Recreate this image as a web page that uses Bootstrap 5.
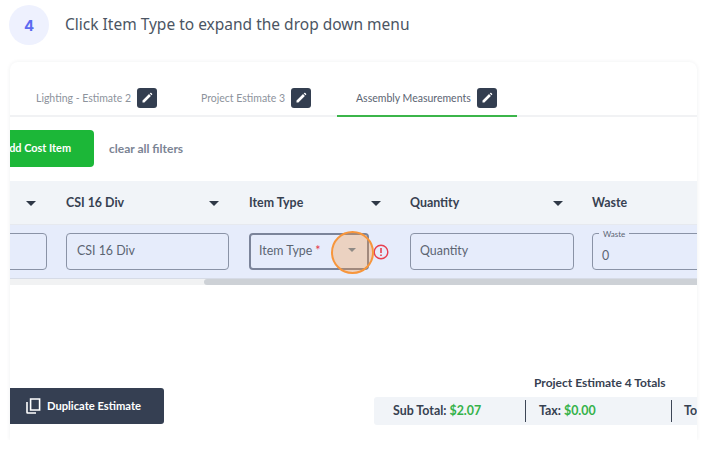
<!DOCTYPE html>
<html lang="en">
<head>
<meta charset="utf-8">
<title>Step 4</title>
<link rel="stylesheet" href="https://cdn.jsdelivr.net/npm/bootstrap@5.3.0/dist/css/bootstrap.min.css">
<style>
html,body{height:450px;overflow:hidden}
body{background:#fff;font-family:"Noto Sans","Liberation Sans",sans-serif;position:relative}
.step-head{height:62px;padding:5px 0 0 9px;gap:16px}
.step-num{width:40px;height:40px;background:#eef1fe;color:#5c6bf0;font:700 15px "Inter",sans-serif}
.step-text{font:400 15.5px "Noto Sans",sans-serif;color:#4b5563;height:40px;padding-bottom:2px}
.shot{margin-left:10px;width:687px;height:378px;border-radius:8px 8px 0 0;box-shadow:0 0 4px rgba(30,40,60,.07);clip-path:inset(-6px -6px 0 -6px);overflow:hidden;font-family:"Lato","Noto Sans",sans-serif}
.tabbar{height:55px;border-bottom:2px solid #f1f2f4;padding-top:26px}
.tabitem{height:29px;gap:6px;font-size:10.5px;color:#8d939c;align-items:flex-start}
.tabitem span{line-height:20px;white-space:nowrap}
.tab-a{margin-left:26px;width:165px}
.tab-b{width:136px}
.tab-c{width:180px;padding-left:19px;color:#5b6472;border-bottom:2px solid #3bb54a}
.penbox{width:20px;height:20px;background:#333e50;border-radius:3px}
.toolbar{height:64px;padding-top:13px;gap:15px}
.addbtn{width:84px;height:37px;background:#1cb738;color:#fff;font-size:10.9px;font-weight:700;border-radius:0 4px 4px 0;white-space:nowrap;padding-right:23px;justify-content:flex-end}
.clear-link{font-size:12px;font-weight:700;color:#7b8494;height:37px}
.gridrow{display:grid;grid-template-columns:56px 183px 161px 182px 200px}
.headrow{height:44px;background:#f1f4f8;border-bottom:1px solid #e6e9ef;font-size:12.4px;font-weight:700;color:#374151;padding-top:2px}
.headcell{padding-right:18px}
.tri{width:0;height:0;border-left:5.5px solid transparent;border-right:5.5px solid transparent;border-top:5.5px solid #2f3847}
.valrow{height:54px;background:#e6ecfb;border-bottom:1px solid #d6dbe6;padding-top:8px}
.fieldbox{height:37px;border:1px solid #8a93a6;border-radius:4px;font-size:12.4px;color:#5b6472;padding-left:10px}
.box-a{width:47px;margin-left:-10px}
.box-b{width:163px}
.box-c{width:120px;border:2px solid #7b849a;padding-left:8px}
.box-d{width:164px;padding-left:9px}
.box-e{width:200px;position:relative;padding-top:13px;padding-left:9px;font-size:12.4px}
.req{color:#e53b4e;margin-left:3px}
.waste-tag{position:absolute;left:6px;top:-5px;background:#e6ecfb;font-size:8px;line-height:10px;padding:0 4px;color:#5b6472}
.erricon{margin-left:4px}
.cellwrap{display:flex;align-items:center;height:37px}
.scrolltrack{height:6px;background:#f1f2f3;padding-left:194px}
.scrollthumb{height:6px;background:#cdd1d6;border-radius:3px 0 0 3px}
.bottomzone{height:104px}
.dupbtn{width:154px;height:36px;margin-top:103px;background:#353f52;color:#fff;font-size:11.2px;font-weight:700;border-radius:0 3px 3px 0;padding-left:16px;gap:6px;white-space:nowrap}
.totals{width:323px;margin-top:89px}
.totals-title{font-size:12px;font-weight:700;color:#374151;margin-left:160px;line-height:18px;white-space:nowrap;margin-bottom:5px}
.totals-bar{height:28px;background:#f1f4f8;border-radius:3px 0 0 3px;font-size:12.4px;font-weight:700;color:#374151;overflow:hidden;white-space:nowrap}
.tot-a{width:152px;padding-left:19px}
.tot-b{width:147px;padding-left:13px;border-left:1px solid #3d4656}
.tot-c{padding-left:12px;border-left:1px solid #3d4656}
.tot-a,.tot-b,.tot-c{height:22px;line-height:22px}
.money{color:#35b24a}
.focus-ring-mark{position:absolute;left:331px;top:231px;width:43px;height:43px;border:2px solid #f7963c;border-radius:50%;background:rgba(247,150,60,.3)}
.focus-ring-mark i{position:absolute;left:15px;top:15px;width:0;height:0;border-left:4px solid transparent;border-right:4px solid transparent;border-top:4px solid #8f8a85}
</style>
</head>
<body>
<div class="step-head d-flex align-items-start">
  <div class="step-num rounded-circle d-flex align-items-center justify-content-center">4</div>
  <div class="step-text d-flex align-items-center">Click Item Type to expand the drop down menu</div>
</div>
<div class="shot">
  <div class="tabbar d-flex">
    <div class="tabitem tab-a d-flex"><span>Lighting - Estimate 2</span><div class="penbox d-flex align-items-center justify-content-center"><svg width="12" height="12" viewBox="0 0 12 12"><path d="M1.5 8.6 8 2.1l1.9 1.9-6.5 6.5H1.5zM8.7 1.4l.6-.5c.3-.3.7-.3 1 0l.8.8c.3.3.3.7 0 1l-.5.6z" fill="#fff"/></svg></div></div>
    <div class="tabitem tab-b d-flex"><span>Project Estimate 3</span><div class="penbox d-flex align-items-center justify-content-center"><svg width="12" height="12" viewBox="0 0 12 12"><path d="M1.5 8.6 8 2.1l1.9 1.9-6.5 6.5H1.5zM8.7 1.4l.6-.5c.3-.3.7-.3 1 0l.8.8c.3.3.3.7 0 1l-.5.6z" fill="#fff"/></svg></div></div>
    <div class="tabitem tab-c d-flex"><span>Assembly Measurements</span><div class="penbox d-flex align-items-center justify-content-center"><svg width="12" height="12" viewBox="0 0 12 12"><path d="M1.5 8.6 8 2.1l1.9 1.9-6.5 6.5H1.5zM8.7 1.4l.6-.5c.3-.3.7-.3 1 0l.8.8c.3.3.3.7 0 1l-.5.6z" fill="#fff"/></svg></div></div>
  </div>
  <div class="toolbar d-flex align-items-start">
    <div class="addbtn d-flex align-items-center">dd Cost Item</div>
    <div class="clear-link d-flex align-items-center">clear all filters</div>
  </div>
  <div class="gridrow headrow align-items-center">
    <div class="headcell d-flex justify-content-end"><div class="tri" style="margin-right:12px"></div></div>
    <div class="headcell d-flex justify-content-between align-items-center" style="padding-right:30px"><span>CSI 16 Div</span><div class="tri"></div></div>
    <div class="headcell d-flex justify-content-between align-items-center" style="padding-right:29px"><span>Item Type</span><div class="tri"></div></div>
    <div class="headcell d-flex justify-content-between align-items-center" style="padding-right:29px"><span>Quantity</span><div class="tri"></div></div>
    <div class="headcell"><span>Waste</span></div>
  </div>
  <div class="gridrow valrow">
    <div><div class="fieldbox box-a"></div></div>
    <div><div class="fieldbox box-b d-flex align-items-center">CSI 16 Div</div></div>
    <div class="cellwrap"><div class="fieldbox box-c d-flex align-items-center"><span>Item Type</span><span class="req">*</span></div>
      <svg class="erricon" width="16" height="16" viewBox="0 0 16 16"><circle cx="8" cy="8" r="6.8" fill="none" stroke="#e8404f" stroke-width="1.4"/><path d="M8 4v5M8 10.6v1.5" stroke="#e8404f" stroke-width="1.6" fill="none"/></svg></div>
    <div><div class="fieldbox box-d d-flex align-items-center">Quantity</div></div>
    <div><div class="fieldbox box-e"><span class="waste-tag">Waste</span>0</div></div>
  </div>
  <div class="scrolltrack"><div class="scrollthumb"></div></div>
  <div class="bottomzone d-flex justify-content-between">
    <div class="dupbtn d-flex align-items-center"><svg width="15" height="16" viewBox="0 0 15 16"><path d="M4.6 1h9v11h-9z" fill="none" stroke="#fff" stroke-width="1.6"/><path d="M1 4v10.5c0 .3.2.5.5.5H10" fill="none" stroke="#fff" stroke-width="1.6"/></svg><span>Duplicate Estimate</span></div>
    <div class="totals">
      <div class="totals-title">Project Estimate 4 Totals</div>
      <div class="totals-bar d-flex align-items-center">
        <div class="tot-a">Sub Total: <span class="money">$2.07</span></div>
        <div class="tot-b">Tax: <span class="money">$0.00</span></div>
        <div class="tot-c">To</div>
      </div>
    </div>
  </div>
</div>
<div class="focus-ring-mark"><i></i></div>
</body>
</html>
